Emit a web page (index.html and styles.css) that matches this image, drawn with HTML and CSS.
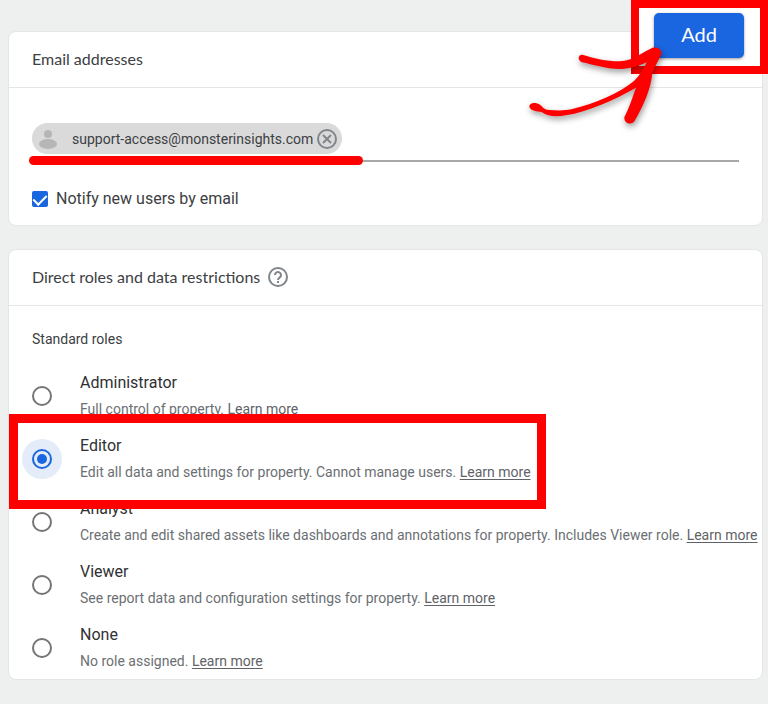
FILE: index.html
```html
<!DOCTYPE html>
<html lang="en">
<head>
    <meta charset="UTF-8">
    <meta name="viewport" content="width=device-width, initial-scale=1.0">
    <title>Add users</title>
    <link rel="stylesheet" href="styles.css">
</head>
<body>
    <form class="page">
        <section class="card">
            <div class="card-header">
                <h2>Email addresses</h2>
            </div>
            <div class="card-body email-body">
                <div class="email-field">
                    <div class="chip">
                        <svg class="avatar" viewBox="0 0 20 20" aria-hidden="true">
                            <circle cx="10" cy="5" r="4"/>
                            <ellipse cx="10" cy="15" rx="9" ry="5"/>
                        </svg>
                        <span>support-access@monsterinsights.com</span>
                        <button type="button" class="icon-button" aria-label="Remove">
                            <svg viewBox="0 0 20 20">
                                <circle cx="10" cy="10" r="9"/>
                                <path d="M6 6l8 8M14 6l-8 8"/>
                            </svg>
                        </button>
                    </div>
                    <input type="email" class="email-input" aria-label="Email addresses">
                    <div class="marker"></div>
                </div>
                <div class="notify">
                    <input type="checkbox" id="notify" class="checkbox" checked>
                    <label for="notify">Notify new users by email</label>
                </div>
            </div>
        </section>

        <section class="card">
            <div class="card-header">
                <h2>Direct roles and data restrictions</h2>
                <button type="button" class="icon-button" aria-label="Help">
                    <svg viewBox="0 0 20 20">
                        <circle cx="10" cy="10" r="9"/>
                        <path d="M7 8a3 3 0 1 1 4.800 2.400C10.700 11.200 10 11.700 10 13"/>
                        <path d="M10 14v2"/>
                    </svg>
                </button>
            </div>
            <div class="card-body">
                <h3>Standard roles</h3>
                <div class="role">
                    <input type="radio" name="role" id="administrator" class="radio">
                    <div class="role-text">
                        <label for="administrator">Administrator</label>
                        <p>Full control of property. <a href="#">Learn more</a></p>
                    </div>
                </div>
                <div class="role">
                    <input type="radio" name="role" id="editor" class="radio" checked>
                    <div class="role-text">
                        <label for="editor">Editor</label>
                        <p>Edit all data and settings for property. Cannot manage users. <a href="#">Learn more</a></p>
                    </div>
                    <div class="highlight"></div>
                </div>
                <div class="role">
                    <input type="radio" name="role" id="analyst" class="radio">
                    <div class="role-text">
                        <label for="analyst">Analyst</label>
                        <p>Create and edit shared assets like dashboards and annotations for property. Includes Viewer role. <a href="#">Learn more</a></p>
                    </div>
                </div>
                <div class="role">
                    <input type="radio" name="role" id="viewer" class="radio">
                    <div class="role-text">
                        <label for="viewer">Viewer</label>
                        <p>See report data and configuration settings for property. <a href="#">Learn more</a></p>
                    </div>
                </div>
                <div class="role">
                    <input type="radio" name="role" id="none" class="radio">
                    <div class="role-text">
                        <label for="none">None</label>
                        <p>No role assigned. <a href="#">Learn more</a></p>
                    </div>
                </div>
            </div>
        </section>

        <div class="add-box">
            <button type="submit" class="add-button">Add</button>
            <svg class="arrow" viewBox="0 0 750 405" aria-hidden="true">
                <path d="M196 165C230 176 262 184 305 184C345 183 370 158 402 144C420 139 434 150 429 165L403 217C400 262 380 310 351 361C342 378 318 371 319 352C334 322 343 294 354 263C290 300 210 335 144 346C116 351 88 350 72 337C57 332 40 335 34 321C34 306 54 306 66 314C72 319 76 326 86 329C112 331 134 333 160 328C235 310 306 278 348 243C366 226 378 206 386 187C364 197 338 206 308 207C260 207 224 193 192 187C176 180 181 161 196 165Z"/>
            </svg>
        </div>
    </form>
</body>
</html>
```

FILE: styles.css
```css
* {
    box-sizing: border-box;
}
body {
    margin: 0;
    background: #eef0f0;
    color: #3c4043;
    font-family: Roboto, Arial, sans-serif;
    font-size: 14px;
}
h2, h3, p {
    margin: 0;
    font-weight: 400;
}
.page {
    position: relative;
    display: flex;
    flex-direction: column;
    gap: 23px;
    padding: 31px 5px 24px 8px;
}
.card {
    background: white;
    border: 1px solid #e4e6e6;
    border-radius: 8px;
}
.card-header {
    display: flex;
    align-items: center;
    gap: 8px;
    height: 56px;
    padding: 0 23px 1px;
    border-bottom: 1px solid #e4e6e6;
}
.card-header h2 {
    font-family: Lato, Roboto, sans-serif;
    font-size: 16px;
    line-height: 24px;
}
.card-body {
    padding: 21px 0 0 23px;
}
.email-body {
    padding: 35px 23px 14px;
}
.icon-button {
    display: block;
    width: 20px;
    height: 20px;
    padding: 0;
    border: none;
    background: none;
    cursor: pointer;
}
.icon-button svg {
    display: block;
    fill: none;
    stroke: #80868b;
    stroke-width: 2;
}
.email-field {
    position: relative;
    display: flex;
    padding-bottom: 6px;
    border-bottom: 2px solid #a8a8a8;
}
.chip {
    display: flex;
    align-items: center;
    height: 31px;
    padding: 0 5px 0 6px;
    border-radius: 16px;
    background: #dadada;
}
.chip .icon-button {
    margin-left: 4px;
}
.avatar {
    width: 20px;
    height: 20px;
    margin-right: 14px;
    fill: #b4b6b7;
}
.email-input {
    flex: 1;
    min-width: 0;
    border: none;
    outline: none;
    background: none;
}
.marker {
    position: absolute;
    left: -3px;
    bottom: -5px;
    width: 334px;
    height: 9px;
    border-radius: 5px;
    background: #ff0000;
}
.notify {
    display: flex;
    align-items: center;
    gap: 8px;
    margin-top: 25px;
    font-size: 16px;
    line-height: 24px;
}
.checkbox {
    appearance: none;
    display: flex;
    justify-content: center;
    width: 16px;
    height: 16px;
    margin: 0;
    border-radius: 2px;
    background: #1a65e0;
}
.checkbox:checked::after {
    content: "";
    width: 6px;
    height: 11px;
    margin-top: 1px;
    border: solid white;
    border-width: 0 2px 2px 0;
    transform: rotate(45deg);
}
h3 {
    margin-bottom: 13px;
    font-size: 14px;
    line-height: 24px;
}
.role {
    position: relative;
    display: flex;
    align-items: center;
    gap: 28px;
    height: 63px;
}
.role label {
    display: block;
    color: #303134;
    font-size: 16px;
    line-height: 24px;
}
.role p {
    color: #6b6f73;
    line-height: 24px;
    margin-top: 2px;
}
.role a {
    color: #5f6368;
    text-underline-offset: 2px;
}
.radio {
    appearance: none;
    display: grid;
    place-content: center;
    flex: none;
    width: 20px;
    height: 20px;
    margin: 0;
    border: 2px solid #757575;
    border-radius: 50%;
}
.radio:checked {
    border-color: #1a65e0;
    background: #e4ecf9;
    box-shadow: 0 0 0 10px #e4ecf9;
}
.radio:checked::after {
    content: "";
    width: 10px;
    height: 10px;
    border-radius: 50%;
    background: #1a65e0;
}
.highlight {
    position: absolute;
    z-index: 1;
    top: -13px;
    left: -23px;
    width: 537px;
    height: 95px;
    border: 9px solid #ff0000;
    pointer-events: none;
}
.add-box {
    position: absolute;
    top: 0;
    right: 0;
    width: 137px;
    height: 74px;
    padding: 5px 15px;
    border: 8px solid #ff0000;
    background: white;
}
.add-button {
    display: block;
    width: 90px;
    height: 45px;
    padding: 0 0 4px;
    border: none;
    border-radius: 5px;
    background: #1a65e0;
    color: white;
    font-family: Lato, Roboto, sans-serif;
    font-size: 20px;
    box-shadow: 0 1px 3px rgba(0, 0, 0, 0.4);
    cursor: pointer;
}
.arrow {
    position: absolute;
    top: -8px;
    right: -8px;
    width: 250px;
    height: 135px;
    fill: #ff0000;
    filter: drop-shadow(1px 3px 3px rgba(0, 0, 0, 0.4));
    pointer-events: none;
}
```
